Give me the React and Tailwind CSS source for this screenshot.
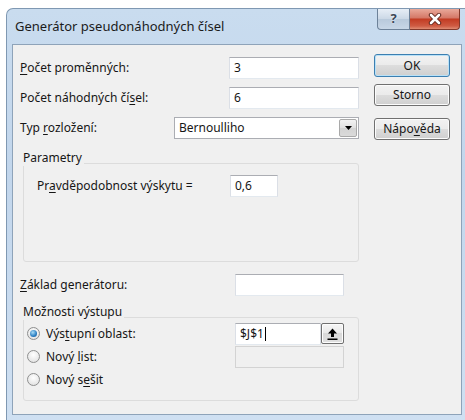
import React from "react";

// Access-key letter, drawn underlined like in Win32 dialogs
const K = ({ children }) => <span className="underline underline-offset-[2px]">{children}</span>;

const TextBox = ({ className = "", children }) => (
  <div
    className={`h-[22px] bg-white border border-[#abadb3] border-l-[#dbdfe6] border-r-[#dbdfe6] border-b-[#e3e9ef] flex items-center px-[4px] ${className}`}
  >
    {children}
  </div>
);

const Btn = ({ children, primary = false, className = "" }) => (
  <div
    className={`w-[76px] h-[22px] rounded-[3px] border flex items-center justify-center ${
      primary
        ? "border-[#3c7fb1] shadow-[inset_0_0_0_1px_#b9e1f7]"
        : "border-[#707070] shadow-[inset_0_0_0_1px_#fcfcfc]"
    } bg-[linear-gradient(#f2f2f2_0%,#ebebeb_50%,#dddddd_50%,#cfcfcf_100%)] ${className}`}
  >
    {children}
  </div>
);

const Radio = ({ checked = false }) => (
  <div className="w-[13px] h-[13px] rounded-full border border-[#8e8f8f] bg-[radial-gradient(circle_at_50%_35%,#ffffff,#dcdcdc)] flex items-center justify-center shrink-0">
    {checked && (
      <div className="w-[7px] h-[7px] rounded-full bg-[radial-gradient(circle_at_40%_35%,#a9dcf7,#2a7ec2_60%,#0d4f91)]" />
    )}
  </div>
);

const GroupBox = ({ title, className = "", children }) => (
  <div className={`relative ml-[10px] w-[336px] border border-[#dcdcdc] rounded-[3px] ${className}`}>
    <div className="absolute left-[-1px] top-[-14px] bg-[#f0f0f0] pr-[2px] leading-[16px]">{title}</div>
    {children}
  </div>
);

export default function App() {
  return (
    <div className="w-[465px] h-[420px] bg-white pt-[8px] pl-[6px] overflow-hidden font-['Noto_Sans','Open_Sans',sans-serif] text-[12px] text-[#161616]">
      <div className="relative w-[462px] h-[412px] rounded-tl-[7px] border-l border-t border-[#7f98b2] bg-[linear-gradient(#c9dcef,#c2d6ec_40%,#cfe0f2)]">
        {/* caption buttons */}
        <div className="absolute top-0 left-[370px] flex">
          <div className="w-[33px] h-[21px] rounded-bl-[4px] border border-t-0 border-[#6d8299] bg-[linear-gradient(#e7eef6,#cbd8e6_50%,#b8c9db_50%,#c8d7e7)] flex items-center justify-center text-[13px] font-bold text-[#3a4656] [text-shadow:0_0_2px_#ffffff]">
            ?
          </div>
          <div className="w-[50px] h-[21px] rounded-br-[4px] border border-t-0 border-l-0 border-[#83392b] bg-[linear-gradient(#e9a99a,#d47766_45%,#c23b22_50%,#cf5b43_85%,#e08d74)] flex items-center justify-center">
            <svg width="14" height="12" viewBox="0 0 14 12">
              <path d="M3 2 L11 10 M11 2 L3 10" stroke="#5a2118" strokeWidth="4.4" strokeLinecap="round" />
              <path d="M3 2 L11 10 M11 2 L3 10" stroke="#ffffff" strokeWidth="2.6" strokeLinecap="round" />
            </svg>
          </div>
        </div>

        {/* title */}
        <div className="h-[35px] flex items-center pl-[8px] text-[13px] text-[#1b1b1b]">Generátor pseudonáhodných čísel</div>

        {/* client area */}
        <div className="ml-[5px] w-[450px] h-[371px] bg-[#f0f0f0] border border-[#8ea3b9]">
          <div className="flex">
            {/* left column */}
            <div className="w-[346px] pt-[12px] flex flex-col gap-[8px]">
              <div className="pl-[7px] h-[22px] flex items-center justify-between">
                <span>
                  <K>P</K>očet proměnných:
                </span>
                <TextBox className="w-[130px]">3</TextBox>
              </div>
              <div className="pl-[7px] h-[22px] flex items-center justify-between">
                <span>
                  Počet náhodných čí<K>s</K>el:
                </span>
                <TextBox className="w-[130px]">6</TextBox>
              </div>
              <div className="pl-[7px] h-[22px] flex items-center justify-between">
                <span>
                  Typ <K>r</K>ozložení:
                </span>
                <div className="w-[185px] h-[22px] bg-white border border-[#abadb3] flex items-center">
                  <span className="flex-1 pl-[4px]">Bernoulliho</span>
                  <div className="w-[18px] h-[18px] mr-[1px] border border-[#a9a9a9] rounded-[2px] bg-[linear-gradient(#f3f3f3,#e1e1e1_50%,#d3d3d3_50%,#dadada)] flex items-center justify-center">
                    <svg width="7" height="4" viewBox="0 0 7 4">
                      <path d="M0 0 H7 L3.5 4 Z" fill="#000" />
                    </svg>
                  </div>
                </div>
              </div>
            </div>

            {/* buttons */}
            <div className="ml-[15px] pt-[9px] flex flex-col">
              <Btn primary className="h-[23px]">OK</Btn>
              <Btn className="mt-[7px]">Storno</Btn>
              <Btn className="mt-[12px]">
                Nápo<K>v</K>ěda
              </Btn>
            </div>
          </div>

          <GroupBox title="Parametry" className="mt-[23px] h-[99px]">
            <div className="pl-[13px] pt-[11px] flex items-center">
              <span className="w-[193px]">
                Pr<K>a</K>vděpodobnost výskytu =
              </span>
              <TextBox className="w-[48px]">0,6</TextBox>
            </div>
          </GroupBox>

          <div className="mt-[12px] pl-[7px] flex items-center">
            <span className="w-[215px]">
              <K>Z</K>áklad generátoru:
            </span>
            <TextBox className="w-[109px]" />
          </div>

          <GroupBox title="Možnosti výstupu" className="mt-[21px] h-[84px]">
            <div className="pt-[4px] pl-[3px] flex flex-col">
              <div className="h-[23px] flex items-center">
                <div className="w-[208px] flex items-center gap-[6px]">
                  <Radio checked />
                  <span>
                    Výs<K>t</K>upní oblast:
                  </span>
                </div>
                <TextBox className="w-[86px]">
                  $J$1<span className="ml-[1px] w-px h-[14px] bg-black" />
                </TextBox>
                <div className="w-[23px] h-[21px] border border-[#707070] rounded-[2px] bg-[linear-gradient(#f6f6f6,#e8e8e8_50%,#d9d9d9_50%,#e0e0e0)] shadow-[inset_0_0_0_1px_#fdfdfd] flex items-center justify-center">
                  <svg width="11" height="12" viewBox="0 0 11 12">
                    <path d="M5.5 0.5 L10 5.5 H7 V9 H4 V5.5 H1 Z" fill="#000" />
                    <rect x="0.5" y="10.5" width="10" height="1.5" fill="#000" />
                  </svg>
                </div>
              </div>
              <div className="h-[23px] flex items-center">
                <div className="w-[208px] flex items-center gap-[6px]">
                  <Radio />
                  <span>
                    Nový <K>l</K>ist:
                  </span>
                </div>
                <div className="w-[109px] h-[22px] bg-[#f0f0f0] border border-[#d3d3d3]" />
              </div>
              <div className="h-[23px] flex items-center">
                <div className="w-[208px] flex items-center gap-[6px]">
                  <Radio />
                  <span>
                    Nový s<K>e</K>šit
                  </span>
                </div>
              </div>
            </div>
          </GroupBox>
        </div>
      </div>
    </div>
  );
}
